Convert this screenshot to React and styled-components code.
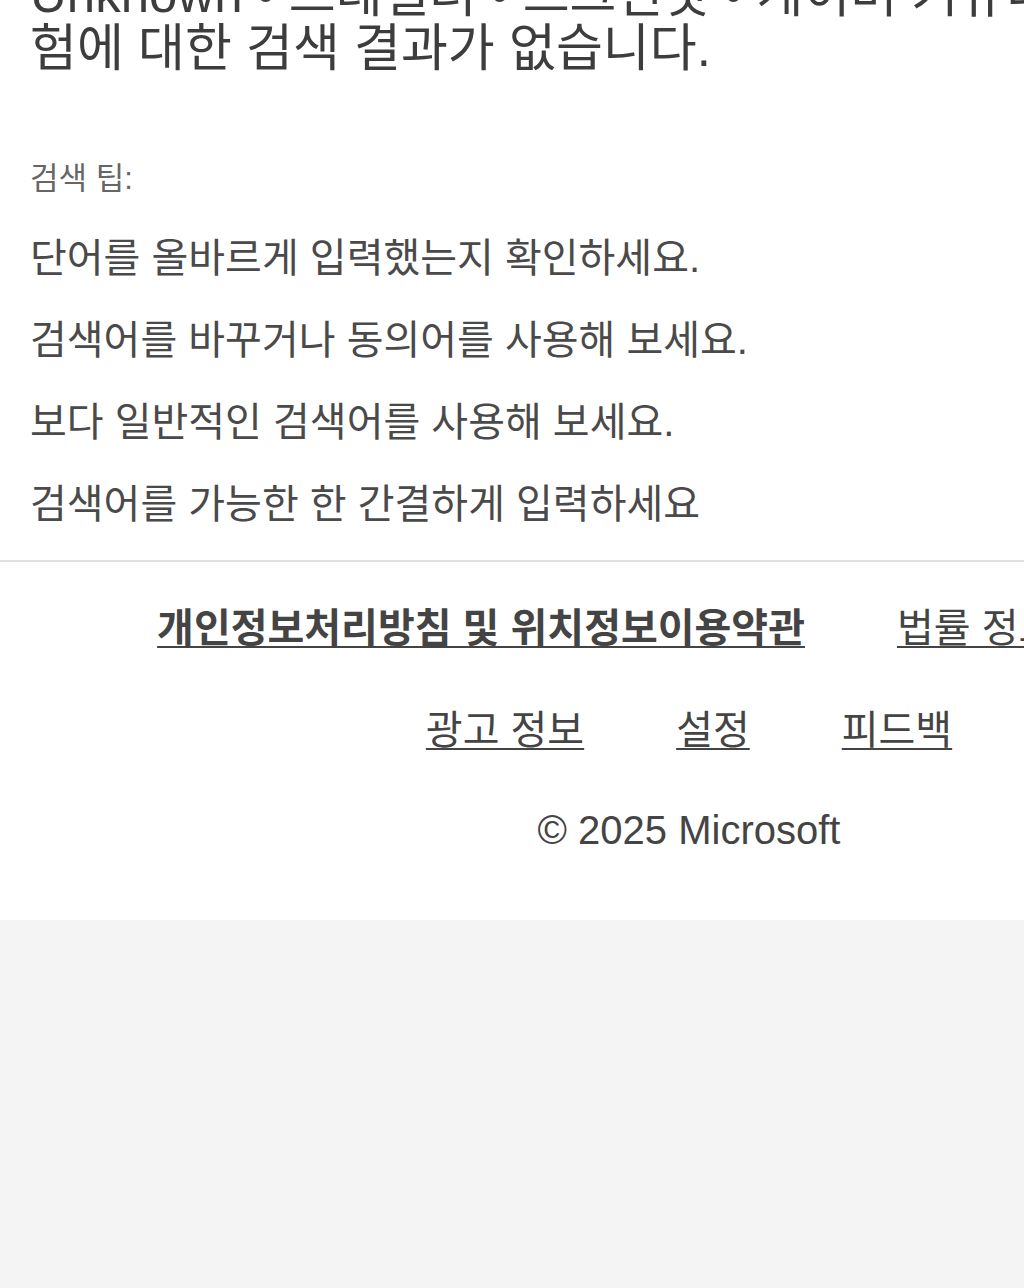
import React from "react";
import styled, { createGlobalStyle } from "styled-components";

const GlobalStyle = createGlobalStyle`
  html, body {
    margin: 0;
    padding: 0;
    background: #f4f4f4;
    overflow: hidden;
  }
  #root {
    overflow: hidden;
  }
`;

const Page = styled.div`
  width: 1378px;
  background: #fff;
  font-family: "Liberation Sans", "Noto Sans CJK KR", sans-serif;
  color: #444;
`;

const Results = styled.section`
  padding: 0 30px;
`;

const NoResults = styled.h1`
  margin: -32px 0 0;
  font-size: 51px;
  line-height: 54px;
  font-weight: 400;
  white-space: nowrap;
  color: #3d3d3d;
`;

const TipsLabel = styled.div`
  margin-top: 85px;
  font-size: 31px;
  line-height: 36px;
  color: #666;
`;

const TipList = styled.ul`
  list-style: none;
  margin: 39px 0 0;
  padding: 0;
  display: flex;
  flex-direction: column;
  gap: 38px;
`;

const Tip = styled.li`
  font-size: 40px;
  line-height: 44px;
  color: #4a4a4a;
`;

const Divider = styled.hr`
  margin: 34px 0 0;
  border: 0;
  border-top: 2px solid #e1e1e1;
`;

const Footer = styled.footer`
  display: flex;
  flex-direction: column;
  align-items: center;
  padding: 42px 0 67px;
`;

const LinkRow = styled.nav`
  display: flex;
  gap: 92px;
  margin-top: ${(p) => p.$top || 0}px;
`;

const FooterLink = styled.a`
  font-size: 40px;
  line-height: 48px;
  font-weight: ${(p) => (p.$bold ? 700 : 400)};
  color: #444;
  text-decoration: underline;
  text-decoration-thickness: 2px;
  text-underline-offset: 4px;
  white-space: nowrap;
`;

const Copyright = styled.div`
  margin-top: 53px;
  font-size: 40px;
  line-height: 46px;
  color: #444;
`;

const tips = [
  "단어를 올바르게 입력했는지 확인하세요.",
  "검색어를 바꾸거나 동의어를 사용해 보세요.",
  "보다 일반적인 검색어를 사용해 보세요.",
  "검색어를 가능한 한 간결하게 입력하세요",
];

export default function App() {
  return (
    <Page>
      <GlobalStyle />
      <Results>
        <NoResults>
          Unknown • 스테일러 • 스크린샷 • 게이머 커뮤니티 경
          <br />
          험에 대한 검색 결과가 없습니다.
        </NoResults>
        <TipsLabel>검색 팁:</TipsLabel>
        <TipList>
          {tips.map((t) => (
            <Tip key={t}>{t}</Tip>
          ))}
        </TipList>
      </Results>
      <Divider />
      <Footer>
        <LinkRow>
          <FooterLink href="#" $bold>
            개인정보처리방침 및 위치정보이용약관
          </FooterLink>
          <FooterLink href="#">법률 정보</FooterLink>
          <FooterLink href="#">광고</FooterLink>
        </LinkRow>
        <LinkRow $top={54}>
          <FooterLink href="#">광고 정보</FooterLink>
          <FooterLink href="#">설정</FooterLink>
          <FooterLink href="#">피드백</FooterLink>
        </LinkRow>
        <Copyright>© 2025 Microsoft</Copyright>
      </Footer>
    </Page>
  );
}
